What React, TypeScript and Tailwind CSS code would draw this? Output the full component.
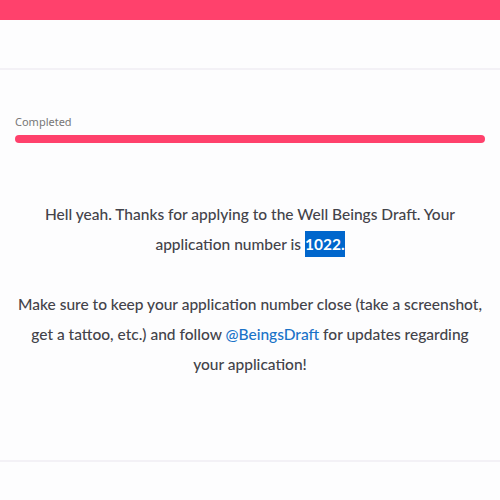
export default function App() {
  return (
    <div className="w-[500px] h-[500px] bg-[#fdfdfe] flex flex-col font-['Noto_Sans',sans-serif] overflow-hidden">
      <div className="h-5 bg-[#ff416c] shrink-0" />
      <div className="h-[50px] shrink-0 border-b-2 border-[#f3f1f6]" />
      <div className="flex flex-col px-[15px] pt-[44px] h-[392px] border-b-2 border-[#f3f1f6] shrink-0">
        <div className="text-[11px] text-[#777] leading-4">Completed</div>
        <div className="mt-[5px] h-[8px] rounded-full bg-[#ff416c]" />
        <div className="mt-[56px] text-center text-[15.5px] leading-[30px] text-[#43434a] font-medium font-['Lato',sans-serif]">
          <p>
            Hell yeah. Thanks for applying to the Well Beings Draft. Your
            <br />
            application number is{" "}
            <span className="bg-[#0066cc] text-white font-bold inline-block leading-[26px]">1022.</span>
          </p>
          <p className="mt-[30px]">
            Make sure to keep your application number close (take a screenshot,
            <br />
            get a tattoo, etc.) and follow{" "}
            <a className="text-[#1a73c8]">@BeingsDraft</a> for updates regarding
            <br />
            your application!
          </p>
        </div>
      </div>
      <div className="flex-1" />
    </div>
  );
}
